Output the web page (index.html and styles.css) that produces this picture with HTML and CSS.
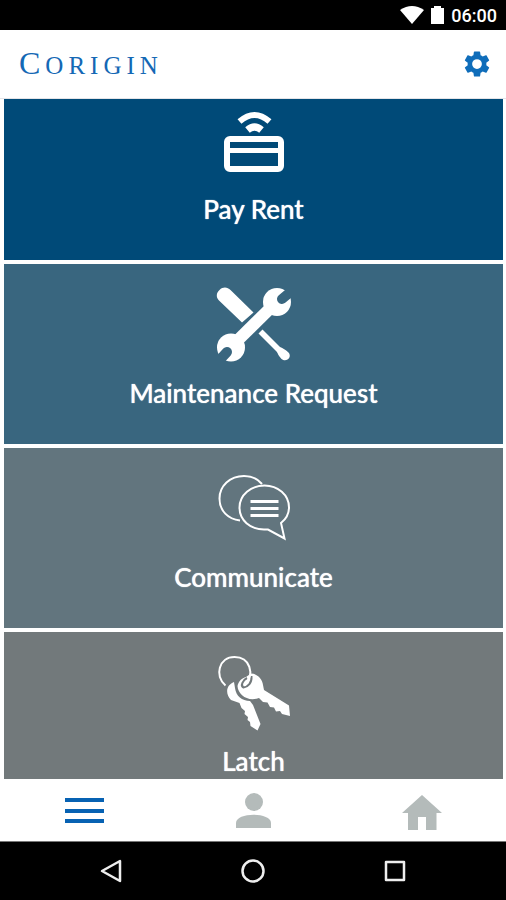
FILE: index.html
```
<!DOCTYPE html>
<html lang="en">

<head>
    <meta charset="UTF-8">
    <meta name="viewport" content="width=device-width, initial-scale=1.0">
    <title>Corigin</title>
    <link rel="stylesheet" href="styles.css">
</head>

<body>
    <div class="status-bar">
        <svg width="24" height="18" viewBox="0 0 24 18" fill="#fff">
            <path d="M0 4Q12-4 24 4L12 18Z"/>
        </svg>
        <svg width="13" height="18" viewBox="0 0 13 18" fill="#fff">
            <path d="M3 0h7v2h3v16H0V2h3z"/>
        </svg>
        <span>06:00</span>
    </div>

    <header class="header">
        <h1 class="logo"><span class="logo-cap">C</span>ORIGIN</h1>
        <button class="icon-btn" type="button" aria-label="Settings">
            <svg width="30" height="30" viewBox="0 0 24 24" fill="#0f6dba">
                <path d="M19.43 12.98c.04-.32.07-.64.07-.98s-.03-.66-.07-.98l2.11-1.65c.19-.15.24-.42.12-.64l-2-3.46c-.12-.22-.39-.3-.61-.22l-2.49 1c-.52-.4-1.08-.73-1.69-.98l-.38-2.65C14.46 2.18 14.25 2 14 2h-4c-.25 0-.46.18-.49.42l-.38 2.65c-.61.25-1.17.59-1.69.98l-2.49-1c-.23-.09-.49 0-.61.22l-2 3.46c-.13.22-.07.49.12.64l2.11 1.65c-.04.32-.07.65-.07.98s.03.66.07.98l-2.11 1.65c-.19.15-.24.42-.12.64l2 3.46c.12.22.39.3.61.22l2.49-1c.52.4 1.08.73 1.69.98l.38 2.65c.03.24.24.42.49.42h4c.25 0 .46-.18.49-.42l.38-2.65c.61-.25 1.17-.59 1.69-.98l2.49 1c.23.09.49 0 .61-.22l2-3.46c.12-.22.07-.49-.12-.64zM12 15.9a3.9 3.9 0 1 1 0-7.8 3.9 3.9 0 0 1 0 7.8z"/>
            </svg>
        </button>
    </header>

    <main class="content">
        <nav class="tiles">
            <a class="tile tile-pay" href="#pay">
                <svg width="80" height="80" viewBox="0 0 80 80" fill="none" stroke="#fff">
                    <path d="M25.5 21.5Q40.5 8.5 55.5 21.5" stroke-width="6"/>
                    <path d="M33.5 30Q40.5 24 47.5 30" stroke-width="7"/>
                    <rect x="13" y="39" width="54" height="30" rx="3" stroke-width="6"/>
                    <path d="M13 50.5h54" stroke-width="5"/>
                </svg>
                <span class="label">Pay Rent</span>
            </a>
            <a class="tile tile-maintenance" href="#maintenance">
                <svg width="80" height="80" viewBox="0 0 80 80">
                    <mask id="jaws" maskUnits="userSpaceOnUse" x="0" y="0" width="80" height="80">
                        <path fill="#fff" d="M0 0h80v80H0z"/>
                        <path stroke="#000" stroke-width="10" stroke-linecap="round" d="M68 15L80 5M13 68L2 80"/>
                    </mask>
                    <path d="M5.5 6C9 2.500 13.500 3 16.500 6L39.500 28.500 28 38.500 5 16.500C2 13.500 2 9 5.500 6z" fill="#fff"/>
                    <path d="M48.500 45.500L66 63C68 64 71.500 65.500 74.500 68.500 78.500 73 72.500 79 67.500 75 64.500 72 64 69.500 62.500 67.500L44.500 49.500z" fill="#fff"/>
                    <g mask="url(#jaws)">
                        <path d="M56.500 24L23 57" stroke="#fff" stroke-width="12"/>
                        <circle cx="63" cy="18" r="14" fill="#fff"/>
                        <circle cx="17" cy="63.500" r="14" fill="#fff"/>
                    </g>
                </svg>
                <span class="label">Maintenance Request</span>
            </a>
            <a class="tile tile-communicate" href="#communicate">
                <svg width="80" height="80" viewBox="0 0 80 80" fill="none" stroke="#fff" stroke-width="2">
                    <path d="M48 16C43 10 37 8 30 8 16 8 5.500 18 5.500 30.500S14 51 26 52.500"/>
                    <path d="M67 55C72 51 75 45 75 39.500 75 27 64 17.500 50.500 17.500S25.500 27 25.500 39.500 36 61.500 50 61.500H54L70.500 70.500 67 55z"/>
                    <path stroke-width="3" d="M36.500 33.500H64.500M36.500 40.500H64.500M36.500 47.500H64.500"/>
                </svg>
                <span class="label">Communicate</span>
            </a>
            <a class="tile tile-latch" href="#latch">
                <svg width="80" height="80" viewBox="0 0 80 80">
                    <path d="M20 30C12 33 11 42 17 48L25.500 51 27.500 56 31 59 30.500 62 34 65 33.500 68 36 70 36.500 74 43.500 78.500 46.500 72 39 53 36 49C28 49 22 44 21 36z" fill="#fff"/>
                    <path d="M37 21.500C43 21.500 48.500 27 49 33L50 38 75 53.500 76 64 68 62 66 59 62 59.500 60 55.500 56 55 53.500 50.500 49 50 45 46C34 50 24 43 23.500 34 24.500 29 28 26 32 25z" fill="#fff"/>
                    <path d="M37.500 24C38 31 34 35 29.500 35.500 26 34 29 28 33 26" fill="none" stroke="#72797b" stroke-width="2"/>
                    <path d="M11.500 33.500C0 24 5 5 20.500 5S41 22 31 33" fill="none" stroke="#fff" stroke-width="2"/>
                </svg>
                <span class="label">Latch</span>
            </a>
        </nav>
    </main>

    <nav class="tab-bar">
        <button class="icon-btn" type="button" aria-label="Menu">
            <svg width="40" height="40" viewBox="0 0 40 40" fill="none" stroke="#0762b3" stroke-width="4">
                <path d="M1 10h39M1 21h39M1 31h39"/>
            </svg>
        </button>
        <button class="icon-btn" type="button" aria-label="Profile">
            <svg width="40" height="40" viewBox="0 0 40 40" fill="#b4bbba">
                <circle cx="21" cy="12" r="9"/>
                <path d="M3 38V33C3 22 38 22 38 33v5z"/>
            </svg>
        </button>
        <button class="icon-btn" type="button" aria-label="Home">
            <svg width="40" height="40" viewBox="0 0 40 40" fill="#b4bbba">
                <path d="M20 5L40 23H34.500V40H24V27H16V40H6V23H0z"/>
            </svg>
        </button>
    </nav>

    <div class="system-nav">
        <button class="icon-btn" type="button" aria-label="Back">
            <svg width="24" height="24" viewBox="0 0 24 24" fill="none" stroke="#eee" stroke-width="2.500" stroke-linejoin="round">
                <path d="M21 2V22L3 12z"/>
            </svg>
        </button>
        <button class="icon-btn" type="button" aria-label="Home screen">
            <svg width="24" height="24" viewBox="0 0 24 24" fill="none" stroke="#eee" stroke-width="2.500">
                <circle cx="12" cy="12" r="10.500"/>
            </svg>
        </button>
        <button class="icon-btn" type="button" aria-label="Recent apps">
            <svg width="24" height="24" viewBox="0 0 24 24" fill="none" stroke="#eee" stroke-width="2.500" stroke-linejoin="round">
                <path d="M3 3h18v18H3z"/>
            </svg>
        </button>
    </div>
</body>

</html>
```
FILE: styles.css
```
* {
    margin: 0;
    padding: 0;
    box-sizing: border-box;
}

body {
    height: 100vh;
    display: flex;
    flex-direction: column;
    background-color: #fff;
    font-family: Lato, "Liberation Sans", sans-serif;
}

svg {
    display: block;
}

.icon-btn {
    border: none;
    background: none;
    cursor: pointer;
}

.status-bar {
    height: 30px;
    flex: none;
    padding: 0 9px;
    display: flex;
    justify-content: flex-end;
    align-items: center;
    gap: 7px;
    background-color: #000;
    color: #fff;
    font-family: Roboto, sans-serif;
    font-size: 18px;
    font-weight: 500;
}

.header {
    height: 69px;
    flex: none;
    padding: 0 14px 0 19px;
    display: flex;
    justify-content: space-between;
    align-items: center;
    border-bottom: 1px solid #e4e4e8;
}

.logo {
    color: #1468b5;
    font-family: "Liberation Serif", serif;
    font-size: 25px;
    font-weight: 400;
    line-height: 32px;
    letter-spacing: 5px;
}

.logo-cap {
    font-size: 32px;
}

.content {
    flex: 1;
    min-height: 0;
    overflow: hidden;
}

/* list is scrolled a little under the header */
.tiles {
    margin: -19px 3px 0 4px;
    display: flex;
    flex-direction: column;
    gap: 4px;
}

.tile {
    padding: 20px 0 35px;
    display: flex;
    flex-direction: column;
    align-items: center;
    gap: 13px;
    color: #fff;
    text-decoration: none;
}

.tile-pay {
    background-color: #004a78;
}

.tile-maintenance {
    background-color: #39667f;
}

.tile-communicate {
    background-color: #62757e;
}

.tile-latch {
    background-color: #72797b;
}

.label {
    font-size: 26px;
    font-weight: 500;
    line-height: 32px;
    text-shadow: 0 0 1px #fff;
}

.tab-bar {
    height: 63px;
    flex: none;
    display: flex;
    align-items: center;
    border-bottom: 1px solid #777;
}

.system-nav {
    height: 58px;
    flex: none;
    padding: 0 40px;
    display: flex;
    align-items: center;
    background-color: #000;
}

.tab-bar .icon-btn,
.system-nav .icon-btn {
    flex: 1;
    display: flex;
    justify-content: center;
}
```
